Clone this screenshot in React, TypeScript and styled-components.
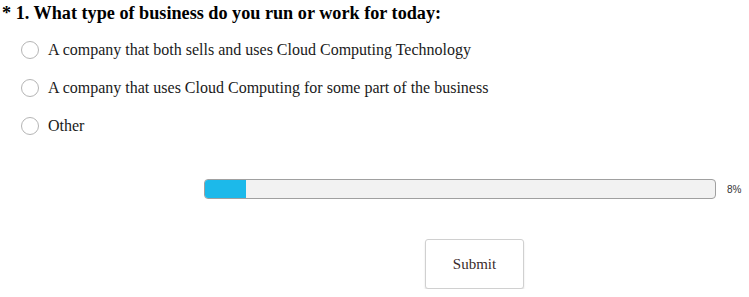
import React from "react";
import styled, { createGlobalStyle } from "styled-components";

const GlobalStyle = createGlobalStyle`
  body {
    margin: 0;
    background: #ffffff;
    font-family: "Liberation Serif", "Times New Roman", serif;
    color: #000;
  }
`;

const options = [
  "A company that both sells and uses Cloud Computing Technology",
  "A company that uses Cloud Computing for some part of the business",
  "Other",
];

const progress = 8;

const App = () => {
  return (
    <Page>
      <GlobalStyle />
      <Question>* 1. What type of business do you run or work for today:</Question>
      <Options>
        {options.map((o) => (
          <Option key={o}>
            <Radio />
            <Label>{o}</Label>
          </Option>
        ))}
      </Options>
      <ProgressRow>
        <Track>
          <Fill style={{ width: `${progress}%` }} />
        </Track>
        <Percent>{progress}%</Percent>
      </ProgressRow>
      <ButtonRow>
        <Submit>Submit</Submit>
      </ButtonRow>
    </Page>
  );
};

export default App;

const Page = styled.div`
  width: 749px;
  padding-top: 2px;
`;

const Question = styled.h1`
  margin: 0 0 0 2px;
  font-size: 18.2px;
  font-weight: bold;
  line-height: 22px;
`;

const Options = styled.div`
  display: flex;
  flex-direction: column;
  gap: 18px;
  margin-top: 16px;
  padding-left: 21px;
`;

const Option = styled.label`
  display: flex;
  align-items: center;
  gap: 9px;
  height: 20px;
`;

const Radio = styled.span`
  width: 18px;
  height: 18px;
  border-radius: 50%;
  border: 1px solid #b5b5b5;
  background: #fff;
  box-sizing: border-box;
  flex-shrink: 0;
`;

const Label = styled.span`
  font-size: 16px;
  color: #1a1a1a;
`;

const ProgressRow = styled.div`
  display: flex;
  align-items: center;
  margin-top: 43px;
  padding-left: 204px;
`;

const Track = styled.div`
  width: 512px;
  height: 20px;
  box-sizing: border-box;
  border: 1px solid #a0a0a0;
  border-radius: 4px;
  background: #f2f2f2;
  overflow: hidden;
`;

const Fill = styled.div`
  height: 100%;
  background: #1cb9ea;
`;

const Percent = styled.span`
  margin-left: 11px;
  font-family: "Liberation Sans", Arial, sans-serif;
  font-size: 10px;
  color: #333;
`;

const ButtonRow = styled.div`
  display: flex;
  padding-left: 425px;
  margin-top: 40px;
`;

const Submit = styled.button`
  width: 99px;
  height: 50px;
  background: #fff;
  border: 1px solid #d0d0d0;
  border-radius: 3px;
  box-shadow: 0 2px 2px rgba(0, 0, 0, 0.12);
  font-family: "Liberation Serif", "Times New Roman", serif;
  font-size: 15px;
  color: #3a2a2a;
  cursor: pointer;
`;
